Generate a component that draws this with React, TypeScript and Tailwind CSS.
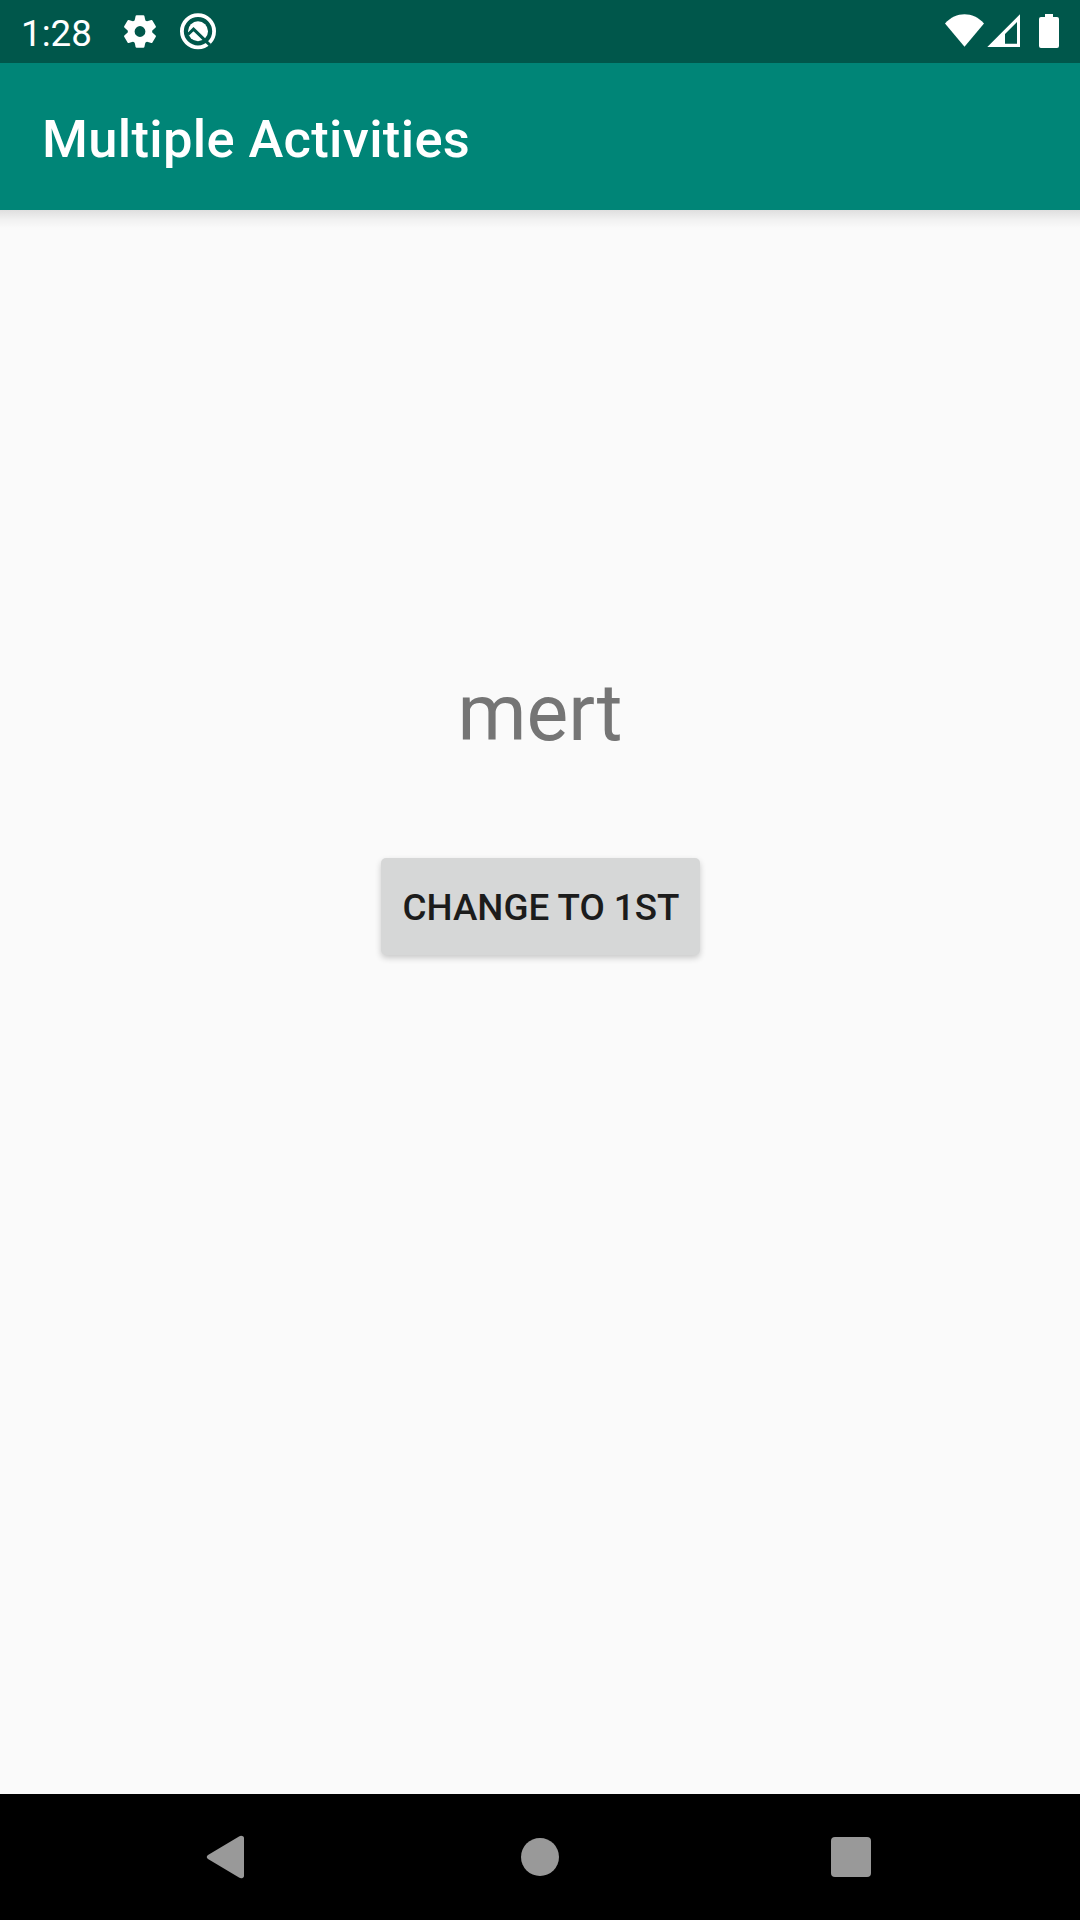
import React from "react";

const gearTeeth = [0, 60, 120, 180, 240, 300];

function StatusBar() {
  return (
    <header className="flex h-[63px] bg-[#00574b] text-white">
      <span className="ml-[21px] w-[99px] pt-[13px] text-[36.75px] leading-[42px]">1:28</span>
      <svg className="mt-[11px] h-[40px] w-[40px]" viewBox="120 11 40 40" fill="none">
        <circle cx="140" cy="31.5" r="8.8" stroke="currentColor" strokeWidth="6.8" />
        {gearTeeth.map((angle) => (
          <path
            key={angle}
            d="M136.6 15.2H143.4Q144.2 15.2 144.4 16L146 23.5H134L135.6 16Q135.8 15.2 136.6 15.2Z"
            fill="currentColor"
            transform={`rotate(${angle} 140 31.5)`}
          />
        ))}
      </svg>
      <svg className="mt-[11px] ml-[18px] h-[40px] w-[40px]" viewBox="178 11 40 40" fill="none">
        <circle cx="198" cy="31.3" r="16.1" stroke="currentColor" strokeWidth="3.8" />
        <circle cx="198" cy="31.3" r="10" fill="currentColor" />
        <path d="M188 34.5L193.5 29.2L210 45.2" stroke="#00574b" strokeWidth="3" />
      </svg>
      <svg className="mt-[12px] ml-auto h-[39px] w-[120px]" viewBox="943 12 120 39" fill="currentColor">
        <path d="M945 23.5C956 11.2 973 11.2 984 23.5L964.5 46.7Z" />
        <path fillRule="evenodd" d="M1020 14.3V47H987.3ZM1017 22L1005 34V43.7H1017Z" />
        <path d="M1045 14H1053V17H1057Q1059 17 1059 19V46Q1059 48 1057 48H1041Q1039 48 1039 46V19Q1039 17 1041 17H1045Z" />
      </svg>
      <span className="w-[17px]" />
    </header>
  );
}

function NavigationBar() {
  return (
    <nav className="flex h-[126px] items-center bg-black text-[#999999]">
      <button aria-label="Back" className="ml-[206px]">
        <svg className="h-[44px] w-[39px]" viewBox="206 1835 39 44" fill="currentColor">
          <path d="M239 1836.5Q241 1835 243 1836.3Q244 1837 244 1838V1876Q244 1877 243 1877.7Q241 1879 239 1877.5L208 1859Q205.5 1857 208 1855Z" />
        </svg>
      </button>
      <button aria-label="Home" className="ml-[276px] size-[38px] rounded-full bg-[#999999]" />
      <button aria-label="Recent apps" className="ml-[272px] size-[40px] rounded-[4px] bg-[#999999]" />
    </nav>
  );
}

export default function App() {
  return (
    <div className="flex h-[1920px] w-[1080px] flex-col overflow-hidden bg-[#fafafa] font-['Roboto',sans-serif]">
      <StatusBar />
      <div className="flex h-[147px] items-center bg-[#008577] px-[42px]">
        <h1 className="pt-[4px] text-[52.5px] leading-[62px] font-medium tracking-[0.33px] text-white">Multiple Activities</h1>
      </div>
      <div className="-mb-[18px] h-[18px] bg-linear-to-b from-black/11 via-black/4 to-transparent" />
      <main className="flex flex-1 flex-col items-center">
        <p className="mt-[457px] text-[78.75px] leading-[92px] text-[#757575]">mert</p>
        <button className="mt-[99px] h-[97px] w-[319px] rounded-[5px] bg-[#d6d7d7] pt-[2px] pl-[2px] text-[36.75px] leading-[44px] font-medium whitespace-nowrap text-[#1c1c1c] shadow-[0_3px_6px_rgba(0,0,0,0.2)]">
          CHANGE TO 1ST
        </button>
      </main>
      <NavigationBar />
    </div>
  );
}
